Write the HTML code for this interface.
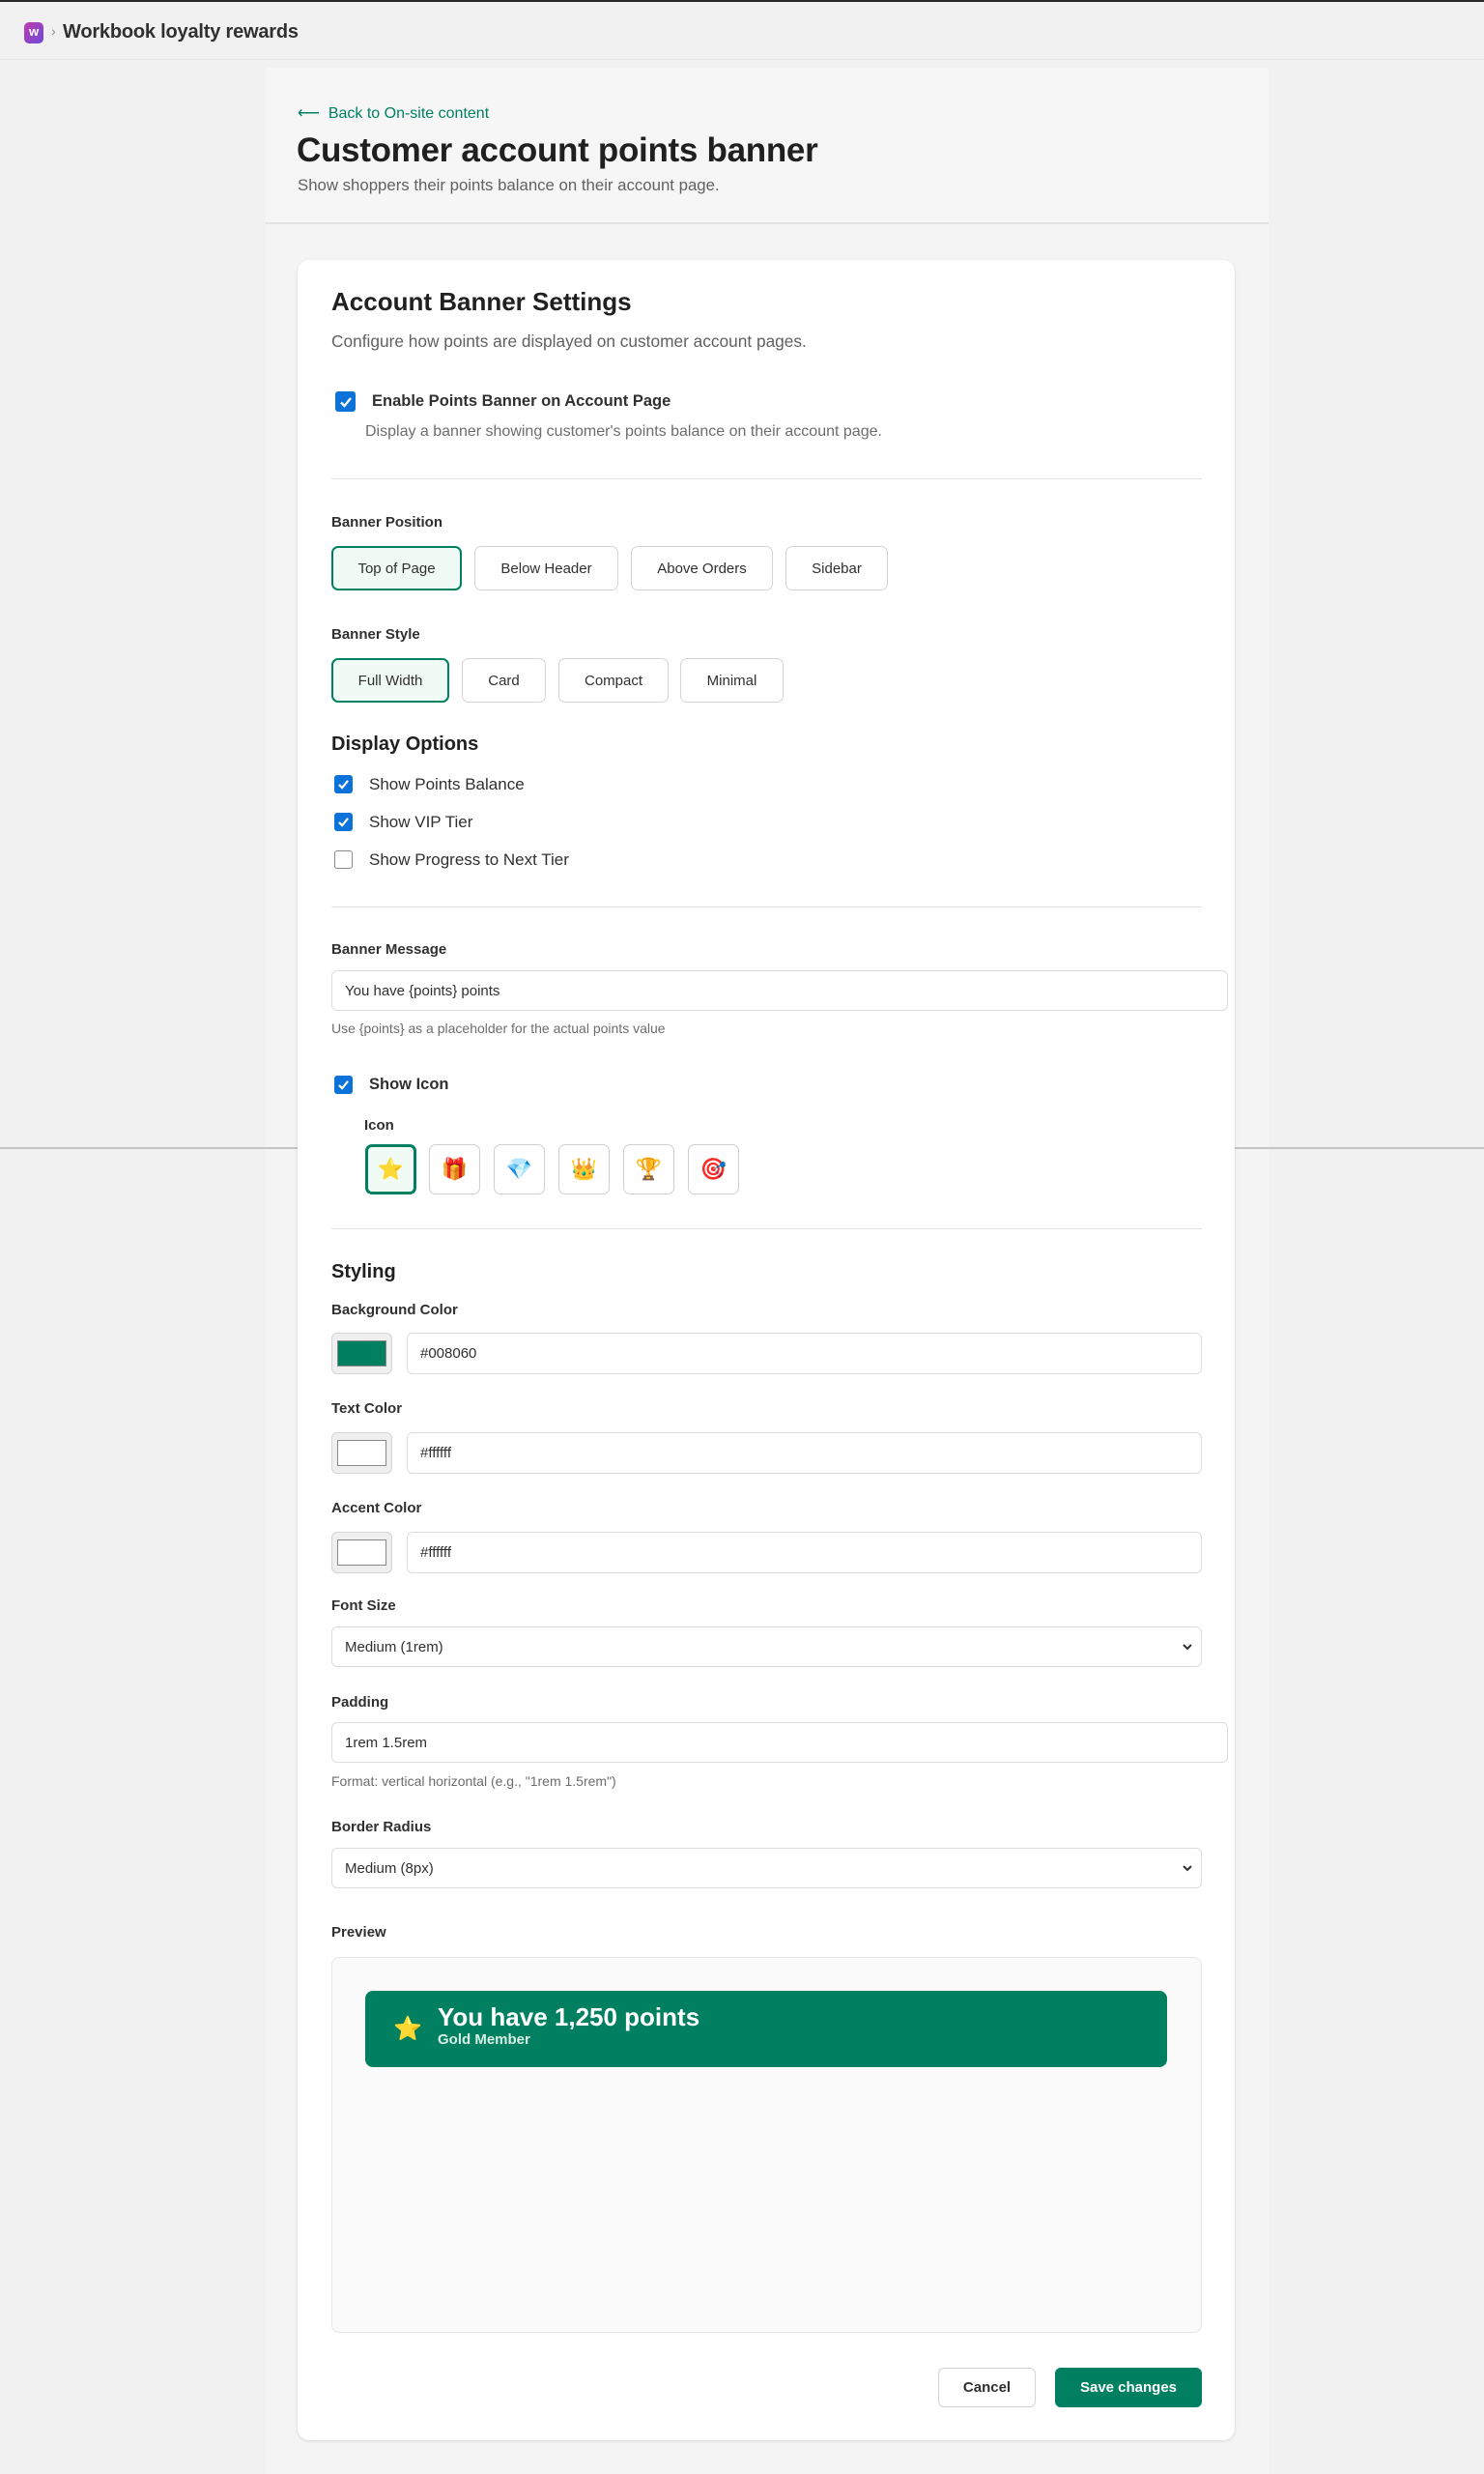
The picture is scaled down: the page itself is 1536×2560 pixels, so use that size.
<!DOCTYPE html>
<html><head><meta charset="utf-8"><style>
*{box-sizing:border-box;margin:0;padding:0}
body{width:1536px;height:2560px;background:#f1f1f1;font-family:"Liberation Sans",sans-serif;color:#303030;position:relative;overflow:hidden}
.a{position:absolute}
.topline{left:0;top:0;width:1536px;height:2px;background:#2a2a2a}
.topbar{left:0;top:2px;width:1536px;height:60px;border-bottom:1px solid #e6e6e6;background:#f1f1f1}
.col{left:275px;top:70px;width:1038px;height:2490px;background:#f4f4f4}
.hdr{left:275px;top:70px;width:1038px;height:162px;background:#f6f6f6;border-bottom:2px solid #e3e3e3}
.card{left:308px;top:269px;width:970px;height:2256px;background:#fff;border-radius:12px;box-shadow:0 1px 3px rgba(0,0,0,.12)}
.lbl{font-size:15px;font-weight:bold;color:#303030}
.btn{height:46px;border:1.5px solid #d4d4d4;border-radius:7px;background:#fff;font-size:15px;color:#303030;display:flex;align-items:center;justify-content:center}
.cb{width:19px;height:19px;border-radius:3px;background:#0b72d9;display:flex;align-items:center;justify-content:center}
.cbo{width:19px;height:19px;border-radius:3px;border:1.5px solid #8a8a8a;background:#fff}
.inp{height:42px;border:1.5px solid #dcdcdc;border-radius:6px;background:#fff;font-size:15px;color:#303030;display:flex;align-items:center;padding-left:13px}
.sw{width:63px;height:43px;border:1.5px solid #d4d4d4;border-radius:6px;background:#efefef;padding:7px 5px}
.sw div{width:100%;height:100%;border:1px solid #888}
.hr{height:1px;background:#e3e3e3;left:343px;width:901px}
.ib{width:53px;height:52px;border:1.5px solid #cfcfcf;border-radius:7px;background:#fff;display:flex;align-items:center;justify-content:center;font-size:22px;font-family:"Noto Color Emoji","DejaVu Sans",sans-serif}
.sel{border:2px solid #008060;background:#f0fbf6}
.ib.sel{border:3px solid #008060;background:#f0fbf6}
.help{font-size:14px;color:#6d6d6d}
</style></head><body>
<div class="a topline"></div>
<div class="a topbar"></div>
<div class="a" style="left:25px;top:23px;width:20px;height:22px;border-radius:5px;background:linear-gradient(135deg,#c33ab0,#6b4bd6);color:#fff;font-size:13px;font-weight:bold;text-align:center;line-height:20px">w</div>
<div class="a" style="left:53px;top:24px;font-size:14px;color:#888">›</div>
<div class="a" style="left:65px;top:22px;font-size:20px;font-weight:bold;color:#303030;letter-spacing:-.2px">Workbook loyalty rewards</div>
<div class="a col"></div>
<div class="a" style="left:0;top:1187px;width:1536px;height:2px;background:#c4c4c4"></div>
<div class="a hdr"></div>
<div class="a" style="left:308px;top:107px;font-size:16px;color:#008060">⟵&nbsp; Back to On-site content</div>
<div class="a" style="left:307px;top:136px;font-size:35px;font-weight:bold;color:#202020;letter-spacing:-.3px">Customer account points banner</div>
<div class="a" style="left:308px;top:182px;font-size:16.8px;color:#616161">Show shoppers their points balance on their account page.</div>

<div class="a card"></div>
<div class="a" style="left:343px;top:297px;font-size:26px;font-weight:bold;color:#202020">Account Banner Settings</div>
<div class="a" style="left:343px;top:343px;font-size:17.3px;color:#616161">Configure how points are displayed on customer account pages.</div>

<div class="a cb" style="left:347px;top:405px;width:21px;height:21px"><svg width="14" height="12" viewBox="0 0 14 12"><path d="M2 6.5l3.5 3.5L12 2" stroke="#fff" stroke-width="2.4" fill="none"/></svg></div>
<div class="a" style="left:385px;top:406px;font-size:16.5px;font-weight:bold;color:#303030">Enable Points Banner on Account Page</div>
<div class="a" style="left:378px;top:438px;font-size:16px;color:#6d6d6d">Display a banner showing customer's points balance on their account page.</div>
<div class="a hr" style="top:495px"></div>

<div class="a lbl" style="left:343px;top:532px">Banner Position</div>
<div class="a btn sel" style="left:343px;top:565px;width:135px">Top of Page</div>
<div class="a btn" style="left:491px;top:565px;width:149px">Below Header</div>
<div class="a btn" style="left:653px;top:565px;width:147px">Above Orders</div>
<div class="a btn" style="left:813px;top:565px;width:106px">Sidebar</div>

<div class="a lbl" style="left:343px;top:648px">Banner Style</div>
<div class="a btn sel" style="left:343px;top:681px;width:122px">Full Width</div>
<div class="a btn" style="left:478px;top:681px;width:87px">Card</div>
<div class="a btn" style="left:578px;top:681px;width:114px">Compact</div>
<div class="a btn" style="left:704px;top:681px;width:107px">Minimal</div>

<div class="a" style="left:343px;top:759px;font-size:20px;font-weight:bold;color:#202020">Display Options</div>
<div class="a cb" style="left:346px;top:802px"><svg width="13" height="11" viewBox="0 0 14 12"><path d="M2 6.5l3.5 3.5L12 2" stroke="#fff" stroke-width="2.4" fill="none"/></svg></div>
<div class="a" style="left:382px;top:802px;font-size:17px">Show Points Balance</div>
<div class="a cb" style="left:346px;top:841px"><svg width="13" height="11" viewBox="0 0 14 12"><path d="M2 6.5l3.5 3.5L12 2" stroke="#fff" stroke-width="2.4" fill="none"/></svg></div>
<div class="a" style="left:382px;top:841px;font-size:17px">Show VIP Tier</div>
<div class="a cbo" style="left:346px;top:880px"></div>
<div class="a" style="left:382px;top:880px;font-size:17px">Show Progress to Next Tier</div>
<div class="a hr" style="top:938px"></div>

<div class="a lbl" style="left:343px;top:974px">Banner Message</div>
<div class="a inp" style="left:343px;top:1004px;width:928px">You have {points} points</div>
<div class="a help" style="left:343px;top:1056px">Use {points} as a placeholder for the actual points value</div>

<div class="a cb" style="left:346px;top:1113px"><svg width="13" height="11" viewBox="0 0 14 12"><path d="M2 6.5l3.5 3.5L12 2" stroke="#fff" stroke-width="2.4" fill="none"/></svg></div>
<div class="a" style="left:382px;top:1113px;font-size:16.5px;font-weight:bold">Show Icon</div>
<div class="a lbl" style="left:377px;top:1156px">Icon</div>
<div class="a ib sel" style="left:378px;top:1184px">⭐</div>
<div class="a ib" style="left:444px;top:1184px">🎁</div>
<div class="a ib" style="left:511px;top:1184px">💎</div>
<div class="a ib" style="left:578px;top:1184px">👑</div>
<div class="a ib" style="left:645px;top:1184px">🏆</div>
<div class="a ib" style="left:712px;top:1184px">🎯</div>
<div class="a hr" style="top:1271px"></div>

<div class="a" style="left:343px;top:1305px;font-size:20px;font-weight:bold;color:#202020">Styling</div>
<div class="a lbl" style="left:343px;top:1347px">Background Color</div>
<div class="a sw" style="left:343px;top:1379px"><div style="background:#008060"></div></div>
<div class="a inp" style="left:421px;top:1379px;width:823px;height:43px">#008060</div>
<div class="a lbl" style="left:343px;top:1449px">Text Color</div>
<div class="a sw" style="left:343px;top:1482px"><div style="background:#fff"></div></div>
<div class="a inp" style="left:421px;top:1482px;width:823px;height:43px">#ffffff</div>
<div class="a lbl" style="left:343px;top:1552px">Accent Color</div>
<div class="a sw" style="left:343px;top:1585px"><div style="background:#fff"></div></div>
<div class="a inp" style="left:421px;top:1585px;width:823px;height:43px">#ffffff</div>

<div class="a lbl" style="left:343px;top:1653px">Font Size</div>
<div class="a inp" style="left:343px;top:1683px;width:901px">Medium (1rem)<svg class="a" style="right:8px;top:16px" width="12" height="8" viewBox="0 0 12 8"><path d="M2 2l4 4 4-4" stroke="#303030" stroke-width="2" fill="none"/></svg></div>
<div class="a lbl" style="left:343px;top:1753px">Padding</div>
<div class="a inp" style="left:343px;top:1782px;width:928px">1rem 1.5rem</div>
<div class="a help" style="left:343px;top:1835px">Format: vertical horizontal (e.g., "1rem 1.5rem")</div>
<div class="a lbl" style="left:343px;top:1882px">Border Radius</div>
<div class="a inp" style="left:343px;top:1912px;width:901px">Medium (8px)<svg class="a" style="right:8px;top:16px" width="12" height="8" viewBox="0 0 12 8"><path d="M2 2l4 4 4-4" stroke="#303030" stroke-width="2" fill="none"/></svg></div>

<div class="a lbl" style="left:343px;top:1991px">Preview</div>
<div class="a" style="left:343px;top:2025px;width:901px;height:389px;background:#fafafa;border:1.5px solid #e6e6e6;border-radius:8px"></div>
<div class="a" style="left:378px;top:2060px;width:830px;height:79px;background:#008060;border-radius:8px"></div>
<div class="a" style="left:407px;top:2084px;font-size:24px;font-family:'Noto Color Emoji','DejaVu Sans',sans-serif;line-height:30px">⭐</div>
<div class="a" style="left:453px;top:2072px;font-size:26px;font-weight:bold;color:#fff">You have 1,250 points</div>
<div class="a" style="left:453px;top:2102px;font-size:15px;font-weight:bold;color:#d8eee6">Gold Member</div>

<div class="a btn" style="left:971px;top:2450px;width:101px;height:41px;font-weight:bold;border-radius:6px">Cancel</div>
<div class="a btn" style="left:1092px;top:2450px;width:152px;height:41px;font-weight:bold;background:#008060;border-color:#008060;color:#fff;border-radius:6px">Save changes</div>
</body></html>
